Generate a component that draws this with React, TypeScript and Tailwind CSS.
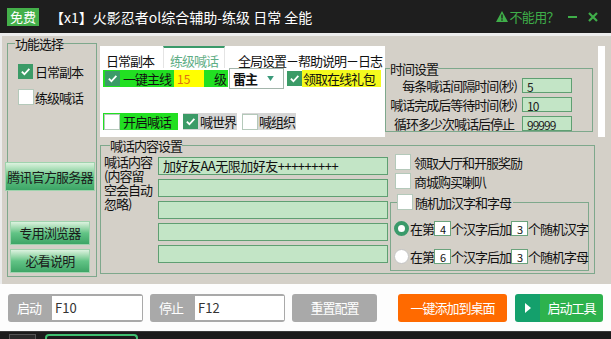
import React from "react";

const Check: React.FC<{ on?: boolean }> = ({ on }) =>
  on ? (
    <span className="flex h-[15px] w-[15px] shrink-0 items-center justify-center bg-[#3b9b67]">
      <svg viewBox="0 0 12 12" className="h-[11px] w-[11px]">
        <path d="M2 6.2l2.8 2.8L10.2 3.2" fill="none" stroke="#fff" strokeWidth="2" />
      </svg>
    </span>
  ) : (
    <span className="h-[16px] w-[16px] shrink-0 border border-[#b4c9ba] bg-white" />
  );

const GreenInput: React.FC<{ value: string }> = ({ value }) => (
  <div className="h-[15px] w-[50px] border border-[#5f9f72] bg-[#c3e5c6] pl-[4px] pt-[2px] text-[12px] leading-[12px] text-[#222]">
    {value}
  </div>
);

const SmallBox: React.FC<{ value: string }> = ({ value }) => (
  <span className="flex h-[15px] w-[17px] items-end justify-center border border-[#6aa37c] bg-white text-[11px] leading-[12px]">
    {value}
  </span>
);

const greenBtn =
  "flex items-center justify-center whitespace-nowrap border border-[#9fd3ad] bg-linear-to-b from-[#dcf2df] via-[#62c486] to-[#3da566] text-[13px] tracking-[-0.8px] text-[#1a1a1a]";

export default function App() {
  return (
    <div className="flex h-[339px] w-[611px] flex-col overflow-hidden bg-[#d4d0c8] font-['Noto_Sans_CJK_SC',sans-serif] text-[#111]">
      {/* title bar */}
      <div className="flex h-[33px] shrink-0 items-center bg-[#1e1e1e] pl-[7px] pr-[13px]">
        <span className="flex h-[18px] items-center bg-[#44b04a] px-[3px] text-[13px] leading-[18px] text-white">
          免费
        </span>
        <span className="ml-[11px] text-[14px] leading-[18px] text-white">
          【x1】火影忍者ol综合辅助-练级 日常 全能
        </span>
        <div className="ml-auto flex items-center text-[#3fae49]">
          <svg viewBox="0 0 12 11" className="h-[11px] w-[12px]">
            <path d="M6 0L12 11H0z" fill="#3fae49" />
            <rect x="5.3" y="3.5" width="1.4" height="4" fill="#1e1e1e" />
            <rect x="5.3" y="8.3" width="1.4" height="1.4" fill="#1e1e1e" />
          </svg>
          <span className="ml-[1px] text-[13px] leading-[16px] tracking-[-0.6px]">不能用？</span>
          <span className="ml-[9px] h-[2px] w-[9px] bg-[#3fae49]" />
          <svg viewBox="0 0 10 10" className="ml-[11px] h-[10px] w-[10px]">
            <path d="M1 1l8 8M9 1l-8 8" stroke="#3fae49" strokeWidth="2.2" />
          </svg>
        </div>
      </div>
      <div className="h-[3px] shrink-0 bg-[#ececec]" />

      {/* main */}
      <div className="flex h-[248px] shrink-0 border-l-[2px] border-[#ececec]">
        {/* left */}
        <div className="w-[98px] shrink-0 pl-[5px]">
          <fieldset className="mt-[1px] h-[240px] w-[90px] border border-[#7ea88c]">
            <legend className="ml-[7px] text-[13px] leading-[13px] tracking-[-1px]">功能选择</legend>
            <div className="mt-[14px] flex items-center gap-[2px] pl-[10px]">
              <Check on />
              <span className="text-[13px] leading-[15px] tracking-[-1px]">日常副本</span>
            </div>
            <div className="mt-[10px] flex items-center gap-[1px] pl-[10px]">
              <Check />
              <span className="text-[13px] leading-[15px] tracking-[-1px]">练级喊话</span>
            </div>
            <div className={`-ml-[3px] mt-[57px] h-[29px] w-[90px] ${greenBtn}`}>腾讯官方服务器</div>
            <div className={`ml-[2px] mt-[30px] h-[24px] w-[80px] ${greenBtn}`}>专用浏览器</div>
            <div className={`ml-[2px] mt-[4px] h-[24px] w-[80px] ${greenBtn}`}>必看说明</div>
          </fieldset>
        </div>

        {/* right */}
        <div className="flex flex-1 flex-col pt-[10px]">
          <div className="flex h-[91px] shrink-0">
            {/* tab control */}
            <div className="flex w-[285px] shrink-0 flex-col bg-white">
              <div className="flex h-[22px] shrink-0 whitespace-nowrap text-[13px] leading-[14px] tracking-[-1px]">
                <div className="w-[63px] pl-[6px] pt-[8px]">日常副本</div>
                <div className="w-[62px] border-x border-t-2 border-x-[#e4e4e4] border-t-[#3a9a6a] pt-[6px] text-center text-[#5fae86]">
                  练级喊话
                </div>
                <div className="pl-[13px] pt-[8px]">全局设置－帮助说明－日志</div>
              </div>
              <div className="flex flex-1 flex-col whitespace-nowrap">
                <div className="flex h-[21px] items-center">
                  <div className="ml-[3px] flex h-[17px] w-[125px] items-center bg-[#22e022] pl-[2px]">
                    <Check on />
                    <span className="ml-[3px] text-[13px] leading-[15px] tracking-[-1px]">一键主线</span>
                    <span className="ml-[3px] flex h-[17px] w-[30px] items-center bg-[#ffff00] pl-[3px] text-[12px] text-[#e07010]">
                      15
                    </span>
                    <span className="ml-[10px] text-[13px] leading-[15px] tracking-[-1px]">级</span>
                  </div>
                  <div className="ml-[1px] flex h-[21px] w-[55px] items-center border border-[#a3b5ab] bg-white pl-[3px]">
                    <span className="text-[13px] font-bold leading-[15px] tracking-[-1px]">雷主</span>
                    <svg viewBox="0 0 8 6" className="ml-[10px] h-[5px] w-[7px]">
                      <path d="M0 0h8L4 6z" fill="#3a9a7a" />
                    </svg>
                  </div>
                  <div className="ml-[3px] flex h-[17px] items-center">
                    <Check on />
                    <span className="flex h-[17px] w-[79px] items-center bg-[#f4fa1e] pl-[1px] text-[13px] tracking-[-1px]">
                      领取在线礼包
                    </span>
                  </div>
                </div>
                <div className="mt-[24px] flex h-[17px] items-center">
                  <div className="ml-[3px] flex h-[17px] w-[75px] items-center bg-[#22e022] pl-[1px]">
                    <Check />
                    <span className="ml-[3px] text-[13px] leading-[15px] tracking-[-1px]">开启喊话</span>
                  </div>
                  <div className="ml-[5px] flex h-[17px] w-[54px] items-center bg-[#d6d6d6]">
                    <Check on />
                    <span className="ml-[2px] text-[13px] leading-[15px] tracking-[-1px]">喊世界</span>
                  </div>
                  <div className="ml-[5px] flex h-[17px] w-[54px] items-center bg-[#d6d6d6]">
                    <Check />
                    <span className="ml-[1px] text-[13px] leading-[15px] tracking-[-1px]">喊组织</span>
                  </div>
                </div>
              </div>
            </div>

            {/* time settings */}
            <div className="w-[208px] shrink-0">
              <fieldset className="mt-[16px] h-[70px] w-full border border-[#7ea88c]">
                <legend className="ml-[4px] text-[13px] leading-[13px] tracking-[-1px]">时间设置</legend>
                <div className="mt-[3px] flex flex-col gap-[4px] whitespace-nowrap pr-[20px] text-[13px] leading-[15px] tracking-[-1px]">
                  <div className="flex items-center justify-end gap-[5px]">
                    <span>每条喊话间隔时间(秒)</span>
                    <GreenInput value="5" />
                  </div>
                  <div className="flex items-center justify-end gap-[5px]">
                    <span>喊话完成后等待时间(秒)</span>
                    <GreenInput value="10" />
                  </div>
                  <div className="flex items-center justify-end gap-[5px]">
                    <span className="mr-[3px]">循环多少次喊话后停止</span>
                    <GreenInput value="99999" />
                  </div>
                </div>
              </fieldset>
            </div>
            <div className="w-[5px] shrink-0" />
            <div className="w-[7px] shrink-0 bg-white" />
          </div>

          {/* content settings */}
          <fieldset className="mt-[2px] h-[135px] w-[495px] border border-[#7ea88c]">
            <legend className="ml-[9px] text-[13px] leading-[13px] tracking-[-1px]">喊话内容设置</legend>
            <div className="flex">
              <div className="w-[57px] shrink-0 whitespace-nowrap pl-[3px] pt-[3px] text-[13px] leading-[14px] tracking-[-1px]">
                喊话内容
                <br />
                (内容留
                <br />
                空会自动
                <br />
                忽略)
              </div>
              <div className="flex w-[230px] shrink-0 flex-col gap-[4px] pt-[5px]">
                <div className="h-[18px] whitespace-nowrap border border-[#5f9f72] bg-[#c3e5c6] pl-[4px] text-[13px] leading-[16px] tracking-[-0.5px]">
                  加好友AA无限加好友+++++++++
                </div>
                <div className="h-[18px] border border-[#5f9f72] bg-[#c3e5c6]" />
                <div className="h-[18px] border border-[#5f9f72] bg-[#c3e5c6]" />
                <div className="h-[18px] border border-[#5f9f72] bg-[#c3e5c6]" />
                <div className="h-[18px] border border-[#5f9f72] bg-[#c3e5c6]" />
              </div>
              <div className="ml-[2px] w-[204px] shrink-0 whitespace-nowrap pt-[2px] text-[13px] leading-[15px] tracking-[-1px]">
                <div className="flex items-center gap-[3px] pl-[5px]">
                  <Check />
                  <span>领取大厅和开服奖励</span>
                </div>
                <div className="mt-[3px] flex items-center gap-[3px] pl-[5px]">
                  <Check />
                  <span>商城购买喇叭</span>
                </div>
                <fieldset className="mt-[5px] h-[77px] w-[199px] border border-[#7ea88c]">
                  <legend className="ml-[6px]">
                    <span className="flex items-center gap-[2px] pr-[2px]">
                      <Check />
                      <span>随机加汉字和字母</span>
                    </span>
                  </legend>
                  <div className="mt-[11px] flex items-center pl-[3px]">
                    <span className="h-[15px] w-[15px] rounded-full border-[4px] border-[#3a9a6a] bg-white" />
                    <span className="ml-[1px]">在第</span>
                    <SmallBox value="4" />
                    <span>个汉字后加</span>
                    <SmallBox value="3" />
                    <span>个随机汉字</span>
                  </div>
                  <div className="mt-[13px] flex items-center pl-[3px]">
                    <span className="h-[15px] w-[15px] rounded-full border border-[#c4c4c4] bg-white" />
                    <span className="ml-[1px]">在第</span>
                    <SmallBox value="6" />
                    <span>个汉字后加</span>
                    <SmallBox value="3" />
                    <span>个随机字母</span>
                  </div>
                </fieldset>
              </div>
            </div>
          </fieldset>
        </div>
      </div>

      {/* bottom bar */}
      <div className="flex h-[47px] shrink-0 whitespace-nowrap bg-[#fdfdfd] pl-[8px] pt-[10px] text-[13px] leading-[16px]">
        <div className="flex h-[28px] w-[135px] items-center rounded-[3px] bg-[#a9a9a9]">
          <span className="w-[44px] pl-[9px] tracking-[-1px] text-white">启动</span>
          <span className="flex h-[24px] w-[90px] items-center bg-white pl-[3px] text-[#333]">F10</span>
        </div>
        <div className="ml-[7px] flex h-[28px] w-[135px] items-center rounded-[3px] bg-[#a9a9a9]">
          <span className="w-[45px] pl-[9px] tracking-[-1px] text-white">停止</span>
          <span className="flex h-[24px] w-[89px] items-center bg-white pl-[3px] text-[#333]">F12</span>
        </div>
        <div className="ml-[7px] flex h-[28px] w-[85px] items-center justify-center rounded-[3px] bg-[#a9a9a9] tracking-[-1px] text-white">
          重置配置
        </div>
        <div className="ml-[21px] flex h-[28px] w-[109px] items-center justify-center rounded-[3px] bg-[#ff6a00] tracking-[-1px] text-white">
          一键添加到桌面
        </div>
        <div className="ml-[8px] flex h-[28px] w-[88px] overflow-hidden rounded-[3px]">
          <span className="flex w-[25px] items-center justify-center bg-[#14a06c]">
            <svg viewBox="0 0 6 10" className="h-[10px] w-[6px]">
              <path d="M0 0l6 5-6 5z" fill="#fff" />
            </svg>
          </span>
          <span className="flex flex-1 items-center justify-center bg-[#2db24d] tracking-[-1px] text-white">启动工具</span>
        </div>
      </div>

      {/* lower edge */}
      <div className="flex h-[8px] shrink-0 items-end border-t border-[#3a3a3a] bg-[#1b1b1b] pl-[9px]">
        <span className="h-[5px] w-[27px] border-x border-t border-[#555] bg-[#2a2a2a]" />
        <span className="ml-[9px] h-[5px] w-[93px] rounded-t-[4px] border-x-2 border-t-2 border-[#3fbf6f]" />
      </div>
    </div>
  );
}
